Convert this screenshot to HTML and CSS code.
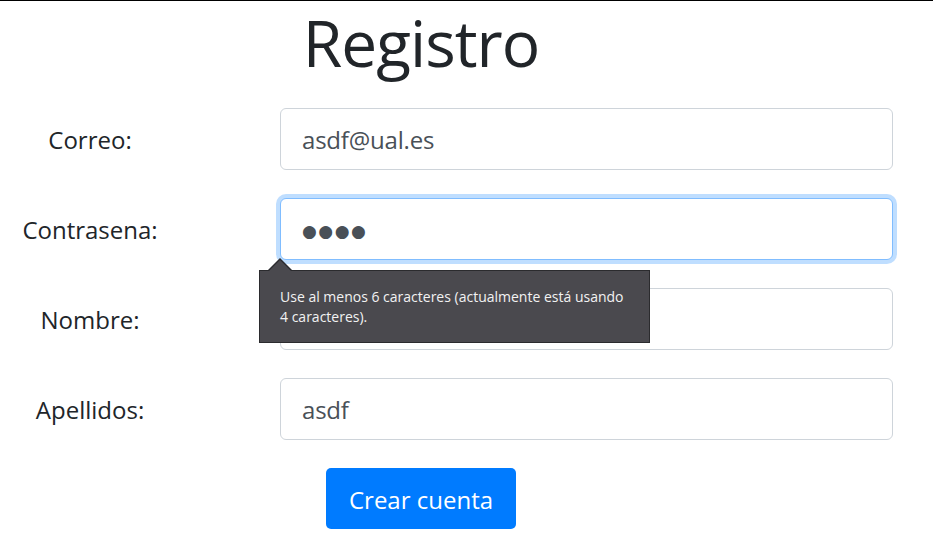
FILE: index.html
```html
<!DOCTYPE html>
<html lang="es">
<head>
<meta charset="utf-8">
<title>Registro</title>
<link rel="stylesheet" href="styles.css">
</head>
<body>
<main class="page">
  <h1 class="title">Registro</h1>
  <form class="form">
    <label class="field-label" for="correo">Correo:</label>
    <div class="field"><input class="control" id="correo" type="email" value="asdf@ual.es"></div>

    <label class="field-label" for="pass">Contrasena:</label>
    <div class="field">
      <input class="control is-focused pass" id="pass" type="text" value="●●●●" readonly aria-label="Contraseña oculta">
      <div class="tooltip">Use al menos 6 caracteres (actualmente está usando 4 caracteres).</div>
    </div>

    <label class="field-label" for="nombre">Nombre:</label>
    <div class="field"><input class="control" id="nombre" type="text" value=""></div>

    <label class="field-label" for="apellidos">Apellidos:</label>
    <div class="field"><input class="control" id="apellidos" type="text" value="asdf"></div>
  </form>
  <div class="actions">
    <button class="btn" type="button">Crear cuenta</button>
  </div>
</main>
</body>
</html>
```
FILE: styles.css
```css
html, body {
  margin: 0;
  padding: 0;
  background: #fff;
}
body {
  border-top: 1px solid #000;
  font-family: "Open Sans", "Noto Sans", sans-serif;
  color: #212529;
}
.page {
  width: 933px;
}
.title {
  width: 842px;
  margin: 4px 0 26px;
  text-align: center;
  font-size: 64px;
  font-weight: 400;
  line-height: 1.2;
  letter-spacing: -1px;
}
.form {
  display: grid;
  grid-template-columns: 180px 613px;
  column-gap: 100px;
  row-gap: 28px;
}
.field-label {
  align-self: center;
  text-align: center;
  font-size: 24px;
  letter-spacing: 0;
  padding-top: 2px;
}
.field {
  position: relative;
}
.control {
  display: block;
  box-sizing: border-box;
  width: 100%;
  height: 62px;
  margin: 0;
  padding: 2px 21px 0;
  border: 1px solid #ced4da;
  border-radius: 6px;
  font-family: inherit;
  font-size: 24px;
  color: #495057;
  background: #fff;
  outline: none;
  letter-spacing: -0.2px;
}
.control.is-focused {
  border-color: #80bdff;
  box-shadow: 0 0 0 4px rgba(0, 123, 255, 0.25);
}
.pass {
  font-family: "DejaVu Sans", sans-serif;
  font-size: 17px;
  letter-spacing: 1.5px;
  padding-top: 4px;
}
.tooltip {
  position: absolute;
  left: -21px;
  top: 72px;
  box-sizing: border-box;
  width: 391px;
  height: 73px;
  padding: 16px 22px 0 20px;
  background: #4a494e;
  border: 1px solid #2b2b2e;
  color: #f2f2f2;
  font-size: 14px;
  line-height: 20px;
  letter-spacing: 0;
  z-index: 2;
}
.tooltip::before,
.tooltip::after {
  content: "";
  position: absolute;
  width: 0;
  height: 0;
  border-style: solid;
  border-color: transparent;
}
.tooltip::before {
  left: 8px;
  top: -13px;
  border-width: 0 12px 12px;
  border-bottom-color: #2b2b2e;
}
.tooltip::after {
  left: 9px;
  top: -11px;
  border-width: 0 11px 11px;
  border-bottom-color: #4a494e;
}
.actions {
  width: 842px;
  margin-top: 28px;
  text-align: center;
}
.btn {
  width: 190px;
  height: 61px;
  padding: 2px 0 0;
  border: 0;
  border-radius: 5px;
  background: #007bff;
  color: #fff;
  font-family: inherit;
  font-size: 24px;
  letter-spacing: 0;
  cursor: pointer;
}
```
